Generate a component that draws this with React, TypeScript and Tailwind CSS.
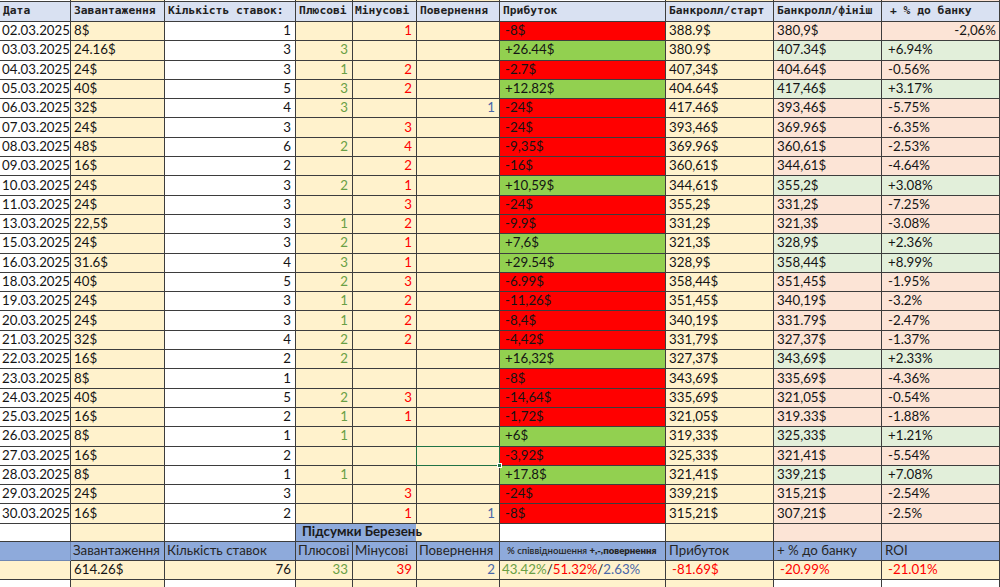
import React from "react";
import clsx from "clsx";

type Row = {
  date: string;
  load: string;
  bets: number;
  plus?: number;
  minus?: number;
  ret?: number;
  profit: string;
  start: string;
  finish: string;
  pct: string;
};

const ROWS: Row[] = [
  { date: "02.03.2025", load: "8$", bets: 1, minus: 1, profit: "-8$", start: "388.9$", finish: "380,9$", pct: "-2,06%" },
  { date: "03.03.2025", load: "24.16$", bets: 3, plus: 3, profit: "+26.44$", start: "380.9$", finish: "407.34$", pct: "+6.94%" },
  { date: "04.03.2025", load: "24$", bets: 3, plus: 1, minus: 2, profit: "-2.7$", start: "407,34$", finish: "404.64$", pct: "-0.56%" },
  { date: "05.03.2025", load: "40$", bets: 5, plus: 3, minus: 2, profit: "+12.82$", start: "404.64$", finish: "417,46$", pct: "+3.17%" },
  { date: "06.03.2025", load: "32$", bets: 4, plus: 3, ret: 1, profit: "-24$", start: "417.46$", finish: "393,46$", pct: "-5.75%" },
  { date: "07.03.2025", load: "24$", bets: 3, minus: 3, profit: "-24$", start: "393,46$", finish: "369.96$", pct: "-6.35%" },
  { date: "08.03.2025", load: "48$", bets: 6, plus: 2, minus: 4, profit: "-9,35$", start: "369.96$", finish: "360,61$", pct: "-2.53%" },
  { date: "09.03.2025", load: "16$", bets: 2, minus: 2, profit: "-16$", start: "360,61$", finish: "344,61$", pct: "-4.64%" },
  { date: "10.03.2025", load: "24$", bets: 3, plus: 2, minus: 1, profit: "+10,59$", start: "344,61$", finish: "355,2$", pct: "+3.08%" },
  { date: "11.03.2025", load: "24$", bets: 3, minus: 3, profit: "-24$", start: "355,2$", finish: "331,2$", pct: "-7.25%" },
  { date: "13.03.2025", load: "22,5$", bets: 3, plus: 1, minus: 2, profit: "-9.9$", start: "331,2$", finish: "321,3$", pct: "-3.08%" },
  { date: "15.03.2025", load: "24$", bets: 3, plus: 2, minus: 1, profit: "+7,6$", start: "321,3$", finish: "328,9$", pct: "+2.36%" },
  { date: "16.03.2025", load: "31.6$", bets: 4, plus: 3, minus: 1, profit: "+29.54$", start: "328,9$", finish: "358,44$", pct: "+8.99%" },
  { date: "18.03.2025", load: "40$", bets: 5, plus: 2, minus: 3, profit: "-6.99$", start: "358,44$", finish: "351,45$", pct: "-1.95%" },
  { date: "19.03.2025", load: "24$", bets: 3, plus: 1, minus: 2, profit: "-11,26$", start: "351,45$", finish: "340,19$", pct: "-3.2%" },
  { date: "20.03.2025", load: "24$", bets: 3, plus: 1, minus: 2, profit: "-8,4$", start: "340,19$", finish: "331.79$", pct: "-2.47%" },
  { date: "21.03.2025", load: "32$", bets: 4, plus: 2, minus: 2, profit: "-4,42$", start: "331,79$", finish: "327,37$", pct: "-1.37%" },
  { date: "22.03.2025", load: "16$", bets: 2, plus: 2, profit: "+16,32$", start: "327,37$", finish: "343,69$", pct: "+2.33%" },
  { date: "23.03.2025", load: "8$", bets: 1, profit: "-8$", start: "343,69$", finish: "335,69$", pct: "-4.36%" },
  { date: "24.03.2025", load: "40$", bets: 5, plus: 2, minus: 3, profit: "-14,64$", start: "335,69$", finish: "321,05$", pct: "-0.54%" },
  { date: "25.03.2025", load: "16$", bets: 2, plus: 1, minus: 1, profit: "-1,72$", start: "321,05$", finish: "319.33$", pct: "-1.88%" },
  { date: "26.03.2025", load: "8$", bets: 1, plus: 1, profit: "+6$", start: "319,33$", finish: "325,33$", pct: "+1.21%" },
  { date: "27.03.2025", load: "16$", bets: 2, profit: "-3,92$", start: "325,33$", finish: "321,41$", pct: "-5.54%" },
  { date: "28.03.2025", load: "8$", bets: 1, plus: 1, profit: "+17.8$", start: "321,41$", finish: "339,21$", pct: "+7.08%" },
  { date: "29.03.2025", load: "24$", bets: 3, minus: 3, profit: "-24$", start: "339,21$", finish: "315,21$", pct: "-2.54%" },
  { date: "30.03.2025", load: "16$", bets: 2, minus: 1, ret: 1, profit: "-8$", start: "315,21$", finish: "307,21$", pct: "-2.5%" },
];

const GRID = "grid grid-cols-[71px_94px_131px_57px_64px_83px_166px_108px_108px_118px]";
const BODY_FONT = "font-['Lato','Open_Sans',sans-serif] text-[13.3px] text-[#141414]";
const MONO = "font-['DejaVu_Sans_Mono','Liberation_Mono',monospace] text-[11.3px] font-bold text-[#1f1f1f]";

function Cell({ className, children }: { className?: string; children?: React.ReactNode }) {
  return (
    <div
      className={clsx(
        "flex items-center overflow-hidden whitespace-nowrap border-r border-b border-[#3d3d3d]",
        className
      )}
    >
      {children}
    </div>
  );
}

function DataRow({ r, selected }: { r: Row; selected?: boolean }) {
  const up = r.profit.startsWith("+");
  const gain = up ? "bg-[#e2efda]" : "bg-[#fce4d6]";
  return (
    <div className={clsx(GRID, "h-[19.3px]", BODY_FONT)}>
      <Cell className="bg-white pl-[2px]">{r.date}</Cell>
      <Cell className="bg-[#fff2cc] pl-[3px]">{r.load}</Cell>
      <Cell className="justify-end bg-white pr-[4px]">{r.bets}</Cell>
      <Cell className="justify-end bg-[#fff2cc] pr-[4px] text-[#6a9f45]">{r.plus}</Cell>
      <Cell className="justify-end bg-[#fff2cc] pr-[4px] text-[#ff0000]">{r.minus}</Cell>
      <Cell className={clsx("relative justify-end bg-[#fff2cc] pr-[4px] text-[#4a67a8]", selected && "z-10 overflow-visible")}>
        {r.ret}
        {selected && (
          <>
            {/* active cell outline */}
            <span className="absolute top-[-1px] left-[-1px] right-[-1px] bottom-[-1px] border border-[#217346]" />
            <span className="absolute right-[-3px] bottom-[-3px] h-[5px] w-[5px] border border-white bg-[#217346]" />
          </>
        )}
      </Cell>
      <Cell className={clsx("pl-[5px]", up ? "bg-[#92d050]" : "bg-[#ff0000]")}>{r.profit}</Cell>
      <Cell className="bg-[#fff2cc] pl-[3px]">{r.start}</Cell>
      <Cell className={clsx("pl-[3px]", gain)}>{r.finish}</Cell>
      <Cell className={clsx(r.date === "02.03.2025" ? "justify-end pr-[3px]" : "pl-[6px]", gain)}>
        {r.pct}
      </Cell>
    </div>
  );
}

export default function App() {
  return (
    <div className="h-[587px] w-[1000px] overflow-hidden bg-white">
      {/* clipped row above the header */}
      <div className={clsx(GRID, "h-[2px]")}>
        {["bg-white", "bg-[#fff2cc]", "bg-white", "bg-[#fff2cc]", "bg-[#fff2cc]", "bg-[#fff2cc]", "bg-white", "bg-[#fff2cc]", "bg-[#fce4d6]", "bg-[#fce4d6]"].map(
          (c, i) => (
            <div key={i} className={clsx("border-r border-b border-[#3d3d3d]", c)} />
          )
        )}
      </div>

      {/* header */}
      <div className={clsx(GRID, "h-[20px] bg-[#d9e1f2]", MONO)}>
        <Cell className="pl-[3px]">Дата</Cell>
        <Cell className="pl-[3px]">Завантаження</Cell>
        <Cell className="pl-[3px]">Кількість ставок:</Cell>
        <Cell className="pl-[3px]">Плюсові</Cell>
        <Cell className="pl-[2px]">Мінусові</Cell>
        <Cell className="pl-[3px]">Повернення</Cell>
        <Cell className="pl-[3px]">Прибуток</Cell>
        <Cell className="pl-[3px]">Банкролл/старт</Cell>
        <Cell className="pl-[3px]">Банкролл/фініш</Cell>
        <Cell className="pl-[8px]">+ % до банку</Cell>
      </div>

      {ROWS.map((r) => (
        <DataRow key={r.date} r={r} selected={r.date === "27.03.2025"} />
      ))}

      {/* summary title row */}
      <div className={clsx(GRID, "h-[18px]", BODY_FONT)}>
        <Cell className="bg-white" />
        <Cell className="bg-[#fff2cc]" />
        <Cell className="bg-white" />
        <Cell className="col-span-3 bg-[linear-gradient(to_right,#8eaadb_120px,#fff2cc_120px)] pl-[6px] font-bold text-[#1a1a1a]">
          Підсумки Березень
        </Cell>
        <Cell className="bg-white" />
        <Cell className="bg-[#fff2cc]" />
        <Cell className="bg-[#fce4d6]" />
        <Cell className="bg-[#fce4d6]" />
      </div>

      {/* summary header */}
      <div className={clsx(GRID, "h-[19px] bg-[#8eaadb]", BODY_FONT, "text-[#262626]")}>
        <Cell className="border-[#6f87b3]" />
        <Cell className="pl-[2px]">Завантаження</Cell>
        <Cell className="pl-[2px]">Кількість ставок</Cell>
        <Cell className="pl-[2px]">Плюсові</Cell>
        <Cell className="pl-[2px]">Мінусові</Cell>
        <Cell className="pl-[2px]">Повернення</Cell>
        <Cell className="pl-[7px] text-[9.6px] font-semibold">
          % співвідношення <span className="font-extrabold">&nbsp;+,-,повернення</span>
        </Cell>
        <Cell className="pl-[3px]">Прибуток</Cell>
        <Cell className="pl-[3px]">+ % до банку</Cell>
        <Cell className="pl-[3px]">ROI</Cell>
      </div>

      {/* summary values */}
      <div className={clsx(GRID, "h-[19px] bg-[#fff2cc]", BODY_FONT)}>
        <Cell />
        <Cell className="pl-[3px]">614.26$</Cell>
        <Cell className="justify-end pr-[4px]">76</Cell>
        <Cell className="justify-end pr-[4px] text-[#6a9f45]">33</Cell>
        <Cell className="justify-end pr-[4px] text-[#ff0000]">39</Cell>
        <Cell className="justify-end pr-[4px] text-[#4a67a8]">2</Cell>
        <Cell className="pl-[2px]">
          <span className="text-[#6a9f45]">43.42%</span>/<span className="text-[#ff0000]">51.32%</span>/
          <span className="text-[#4a67a8]">2.63%</span>
        </Cell>
        <Cell className="pl-[6px] text-[#ff0000]">-81.69$</Cell>
        <Cell className="pl-[6px] text-[#ff0000]">-20.99%</Cell>
        <Cell className="pl-[6px] text-[#ff0000]">-21.01%</Cell>
      </div>

      {/* clipped row below */}
      <div className={clsx(GRID, "h-[10px]")}>
        {["bg-white", "bg-[#fff2cc]", "bg-white", "bg-[#fff2cc]", "bg-[#fff2cc]", "bg-[#fff2cc]", "bg-[#fff2cc]", "bg-[#fff2cc]", "bg-white", "bg-white"].map(
          (c, i) => (
            <div key={i} className={clsx("border-r border-[#3d3d3d]", c)} />
          )
        )}
      </div>
    </div>
  );
}
